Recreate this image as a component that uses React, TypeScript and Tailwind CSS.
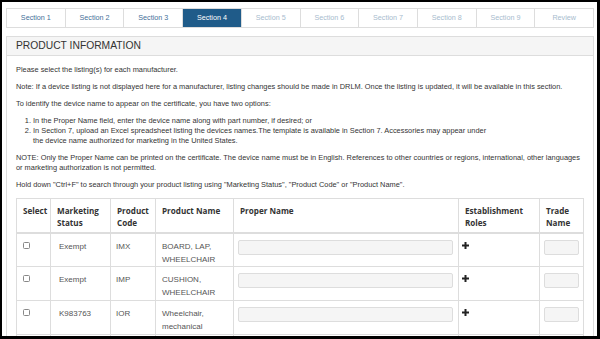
const tabs = ['Section 1', 'Section 2', 'Section 3', 'Section 4', 'Section 5', 'Section 6', 'Section 7', 'Section 8', 'Section 9', 'Review'];

const rows = [
  { status: 'Exempt', code: 'IMX', name: ['BOARD, LAP,', 'WHEELCHAIR'] },
  { status: 'Exempt', code: 'IMP', name: ['CUSHION,', 'WHEELCHAIR'] },
  { status: 'K983763', code: 'IOR', name: ['Wheelchair,', 'mechanical'] },
  { status: '', code: '', name: ['', ''] },
];

function Plus() {
  return (
    <svg width="7" height="7" viewBox="0 0 7 7" className="block">
      <rect x="2.5" y="0" width="2" height="7" fill="#222" />
      <rect x="0" y="2.5" width="7" height="2" fill="#222" />
    </svg>
  );
}

export default function App() {
  return (
    <div className="w-[600px] h-[339px] bg-black pt-[2px] pl-[2px] pr-[3px] pb-[3px] font-['Liberation_Sans',Arial,sans-serif]">
      <div className="w-full h-full bg-white overflow-hidden pt-[6px] pl-[4px] pr-[3px]">
        <div className="flex border border-[#dddddd] h-[20px]">
          {tabs.map((t, i) => (
            <div
              key={t}
              className={
                'flex-1 flex items-center justify-center text-[7.2px] ' +
                (i < tabs.length - 1 ? 'border-r border-[#dddddd] ' : '') +
                (i === 3 ? 'bg-[#1f5b89] text-white' : i < 3 ? 'text-[#3f6f99]' : 'text-[#a7bbce]')
              }
            >
              {t}
            </div>
          ))}
        </div>

        <div className="mt-[8px] border border-[#dddddd] h-[400px]">
          <div className="h-[19px] bg-[#f5f5f5] border-b border-[#dddddd] px-[9px] flex items-center text-[10.3px] text-[#333333]">
            PRODUCT INFORMATION
          </div>
          <div className="px-[9px] pt-[9px] text-[7.4px] leading-[10px] text-[#333333]">
            <p className="mb-[7px]">Please select the listing(s) for each manufacturer.</p>
            <p className="mb-[7px]">
              Note: If a device listing is not displayed here for a manufacturer, listing changes should be made in DRLM. Once the listing is updated, it will be available in this section.
            </p>
            <p className="mb-[7px]">To identify the device name to appear on the certificate, you have two options:</p>
            <ol className="list-decimal pl-[17px] mb-[7px]">
              <li>In the Proper Name field, enter the device name along with part number, if desired; or</li>
              <li>
                In Section 7, upload an Excel spreadsheet listing the devices names.The template is available in Section 7. Accessories may appear under
                <br />
                the device name authorized for marketing in the United States.
              </li>
            </ol>
            <p className="mb-[7px]">
              NOTE: Only the Proper Name can be printed on the certificate. The device name must be in English. References to other countries or regions, international, other languages
              <br />
              or marketing authorization is not permitted.
            </p>
            <p className="mb-[8px]">Hold down "Ctrl+F" to search through your product listing using "Marketing Status", "Product Code" or "Product Name".</p>

            <table className="table-fixed border-collapse w-[567px]">
              <colgroup>
                <col className="w-[34px]" />
                <col className="w-[60px]" />
                <col className="w-[45px]" />
                <col className="w-[78px]" />
                <col className="w-[225px]" />
                <col className="w-[81px]" />
                <col className="w-[44px]" />
              </colgroup>
              <thead>
                <tr className="h-[34px]">
                  {['Select', 'Marketing Status', 'Product Code', 'Product Name', 'Proper Name', 'Establishment Roles', 'Trade Name'].map((h) => (
                    <th
                      key={h}
                      className="border border-[#dddddd] border-b-2 align-top text-left px-[6px] pt-[6px] font-['Open_Sans',sans-serif] font-bold text-[8.1px] leading-[12px] text-[#333333]"
                    >
                      {h}
                    </th>
                  ))}
                </tr>
              </thead>
              <tbody className="text-[8px] leading-[13px] text-[#555555]">
                {rows.map((r, i) => (
                  <tr key={i} className="h-[34px]">
                    <td className="border border-[#dddddd] align-top px-[6px] pt-[8px]">
                      {r.code && <div className="w-[7px] h-[7px] border border-[#888888] rounded-[1.5px] bg-white" />}
                    </td>
                    <td className="border border-[#dddddd] align-top pl-[8px] pt-[6px]">{r.status}</td>
                    <td className="border border-[#dddddd] align-top pl-[5px] pt-[6px]">{r.code}</td>
                    <td className="border border-[#dddddd] align-top pl-[6px] pt-[6px]">
                      {r.name[0]}
                      {r.name[0] && <br />}
                      {r.name[1]}
                    </td>
                    <td className="border border-[#dddddd] align-top px-[4px] pt-[6px]">
                      {r.code && <div className="h-[15px] w-[215px] border border-[#dddddd] bg-[#f5f5f5] rounded-[2px]" />}
                    </td>
                    <td className="border border-[#dddddd] align-top pl-[3px] pt-[8px]">{r.code && <Plus />}</td>
                    <td className="border border-[#dddddd] align-top pl-[4px] pt-[6px]">
                      {r.code && <div className="h-[15px] w-[35px] border border-[#dddddd] bg-[#f5f5f5] rounded-[2px]" />}
                    </td>
                  </tr>
                ))}
              </tbody>
            </table>
          </div>
        </div>
      </div>
    </div>
  );
}
